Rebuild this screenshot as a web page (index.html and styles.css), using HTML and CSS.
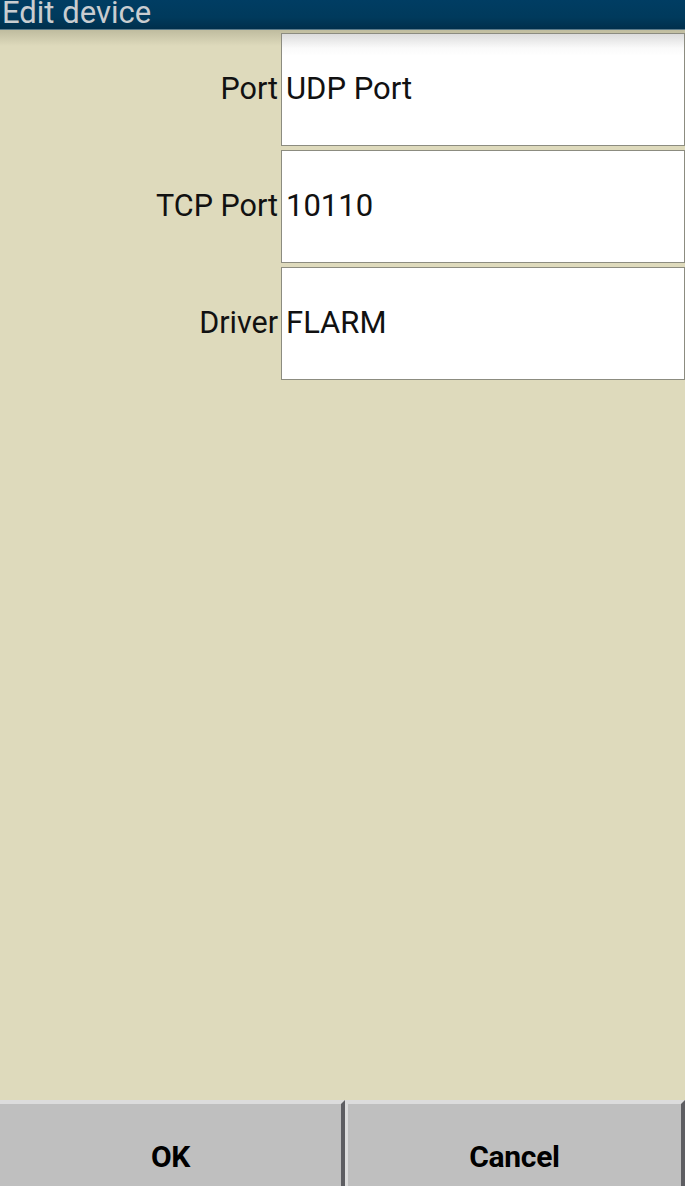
FILE: index.html
```html
<!DOCTYPE html>
<html>
<head>
<meta charset="utf-8">
<link rel="stylesheet" href="styles.css">
</head>
<body>
<div class="screen">
  <header class="titlebar">Edit device</header>
  <main class="form">
    <div class="row">
      <div class="label">Port</div>
      <div class="field">UDP Port</div>
    </div>
    <div class="row">
      <div class="label">TCP Port</div>
      <div class="field">10110</div>
    </div>
    <div class="row">
      <div class="label">Driver</div>
      <div class="field">FLARM</div>
    </div>
  </main>
  <footer class="buttons">
    <button class="btn">OK</button>
    <button class="btn">Cancel</button>
  </footer>
</div>
</body>
</html>
```
FILE: styles.css
```css
html, body {
  margin: 0;
  padding: 0;
}
body {
  font-family: Roboto, "Liberation Sans", sans-serif;
  background: #dedabc;
}
.screen {
  width: 685px;
  height: 1186px;
  display: flex;
  flex-direction: column;
  overflow: hidden;
}
.titlebar {
  height: 30px;
  box-sizing: border-box;
  background: linear-gradient(to bottom, #003d63 0%, #003a5c 60%, #002f4c 100%);
  border-bottom: 1px solid #5a7a8a;
  color: #c9cdd0;
  font-size: 31px;
  line-height: 26px;
  padding-left: 2px;
  white-space: nowrap;
}
.form {
  flex: 1;
  display: flex;
  flex-direction: column;
  gap: 4px;
  padding-top: 3px;
  background: linear-gradient(to bottom, #bfbc9f 0px, #dedabc 16px, #dedabc 100%);
}
.row {
  display: flex;
  align-items: stretch;
  height: 113px;
}
.label {
  width: 281px;
  box-sizing: border-box;
  padding-right: 3px;
  padding-bottom: 2px;
  text-align: right;
  font-size: 30.5px;
  color: #111;
  display: flex;
  align-items: center;
  justify-content: flex-end;
  white-space: nowrap;
}
.field {
  flex: 1;
  box-sizing: border-box;
  border: 1px solid #8c8c80;
  background: #fff;
  font-size: 31px;
  color: #111;
  display: flex;
  align-items: center;
  padding-left: 4px;
  padding-bottom: 2px;
}
.row:first-child .field {
  background: linear-gradient(to bottom, #dcdcdc 0px, #fafafa 14px, #ffffff 22px);
}
.buttons {
  height: 86px;
  display: flex;
}
.btn {
  flex: 1;
  margin: 0;
  box-sizing: border-box;
  background: #bfbfbf;
  border-style: solid;
  border-width: 4px 4px 0 3px;
  border-color: #dcdcdc #5e5e62 #bfbfbf #dcdcdc;
  font-family: Roboto, "Liberation Sans", sans-serif;
  font-weight: bold;
  font-size: 30px;
  letter-spacing: -0.3px;
  color: #000;
  padding: 22px 0 0 0;
}
.btn:first-child {
  flex: 0 0 345px;
  border-left-width: 0;
}
```
